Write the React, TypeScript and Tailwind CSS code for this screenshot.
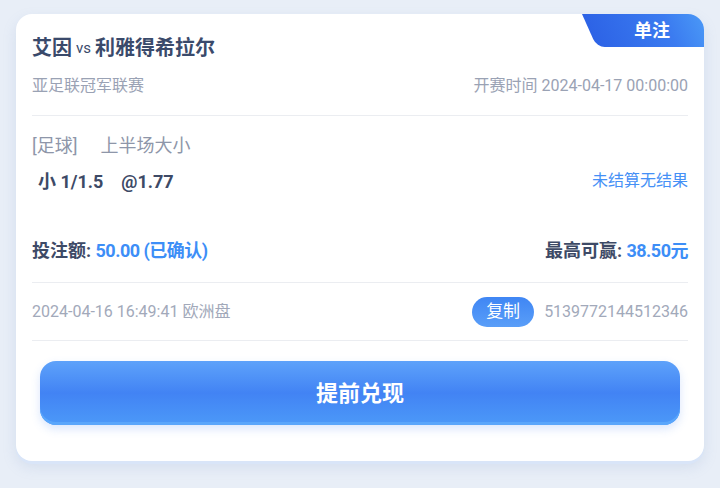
import React from 'react';

const cjk = "font-['Roboto','Noto_Sans_CJK_SC',sans-serif]";

const Divider = () => <div className="h-px bg-[#ebedf1]" />;

export default function App() {
  return (
    <div className={`min-h-[488px] w-[720px] bg-[#e8eef7] pt-[14px] px-4 ${cjk}`}>
      <div className="relative rounded-2xl bg-white px-4 pb-[36px] pt-[22px] shadow-[0_3px_0_#d9e5f8,0_6px_14px_rgba(120,150,200,0.18)]">
        {/* Badge */}
        <div className="absolute right-0 top-0 h-[33px] w-[135px] overflow-hidden rounded-tr-2xl">
          <div className="absolute left-[13px] top-0 h-[33px] w-[160px] origin-top-left skew-x-[24deg] rounded-bl-lg bg-gradient-to-r from-[#2d63e6] via-[#3b7bf0] to-[#5cb3fc]" />
          <div className="relative flex h-full items-center justify-end pr-[34px] text-[18px] font-bold text-white">单注</div>
        </div>

        {/* Match */}
        <div className="flex items-center h-6 text-[20px] font-bold text-[#3a4a6b]">
          艾因<span className="mx-[4px] text-[15px] font-normal">vs</span>利雅得希拉尔
        </div>
        <div className="mt-4 flex h-5 items-center justify-between text-[16px] text-[#9aa2b4]">
          <span>亚足联冠军联赛</span>
          <span>开赛时间 2024-04-17 00:00:00</span>
        </div>
        <div className="mt-[19px]"><Divider /></div>

        {/* Bet */}
        <div className="mt-[18px] flex h-[22px] items-center text-[18px] text-[#8e96a9]">
          <span>[足球]</span>
          <span className="ml-[23px]">上半场大小</span>
        </div>
        <div className="mt-[14px] flex h-[22px] items-center justify-between">
          <span className="pl-[6px] text-[18px] font-bold text-[#3d4a66]">
            小 1/1.5<span className="ml-[18px]">@1.77</span>
          </span>
          <span className="text-[16px] text-[#4590f6]">未结算无结果</span>
        </div>
        <div className="mt-[46px] flex h-6 items-center justify-between text-[18px] font-bold text-[#3d4a66]">
          <span>
            投注额: <span className="tracking-[-0.5px] text-[#3d8ef7]">50.00 (已确认)</span>
          </span>
          <span>
            最高可赢: <span className="tracking-[-0.5px] text-[#3d8ef7]">38.50元</span>
          </span>
        </div>
        <div className="mt-5"><Divider /></div>

        {/* Meta */}
        <div className="flex h-[57px] items-center justify-between text-[16px] text-[#a2a9ba]">
          <span>2024-04-16 16:49:41 欧洲盘</span>
          <div className="flex items-center gap-[10px]">
            <span className="flex h-[30px] w-[62px] items-center justify-center rounded-full bg-gradient-to-b from-[#3f86f4] to-[#5a9ef8] text-[17px] text-white">复制</span>
            <span>5139772144512346</span>
          </div>
        </div>
        <Divider />

        {/* Action */}
        <div className="mt-5 px-2">
          <button className="flex h-[64px] w-full items-center justify-center rounded-2xl bg-gradient-to-b from-[#5ea2fa] via-[#4283f4] to-[#4c99f8] text-[22px] font-bold text-white shadow-[inset_0_-3px_0_#5aa6fb,0_4px_10px_rgba(70,130,240,0.2)]">
            提前兑现
          </button>
        </div>
      </div>
    </div>
  );
}
